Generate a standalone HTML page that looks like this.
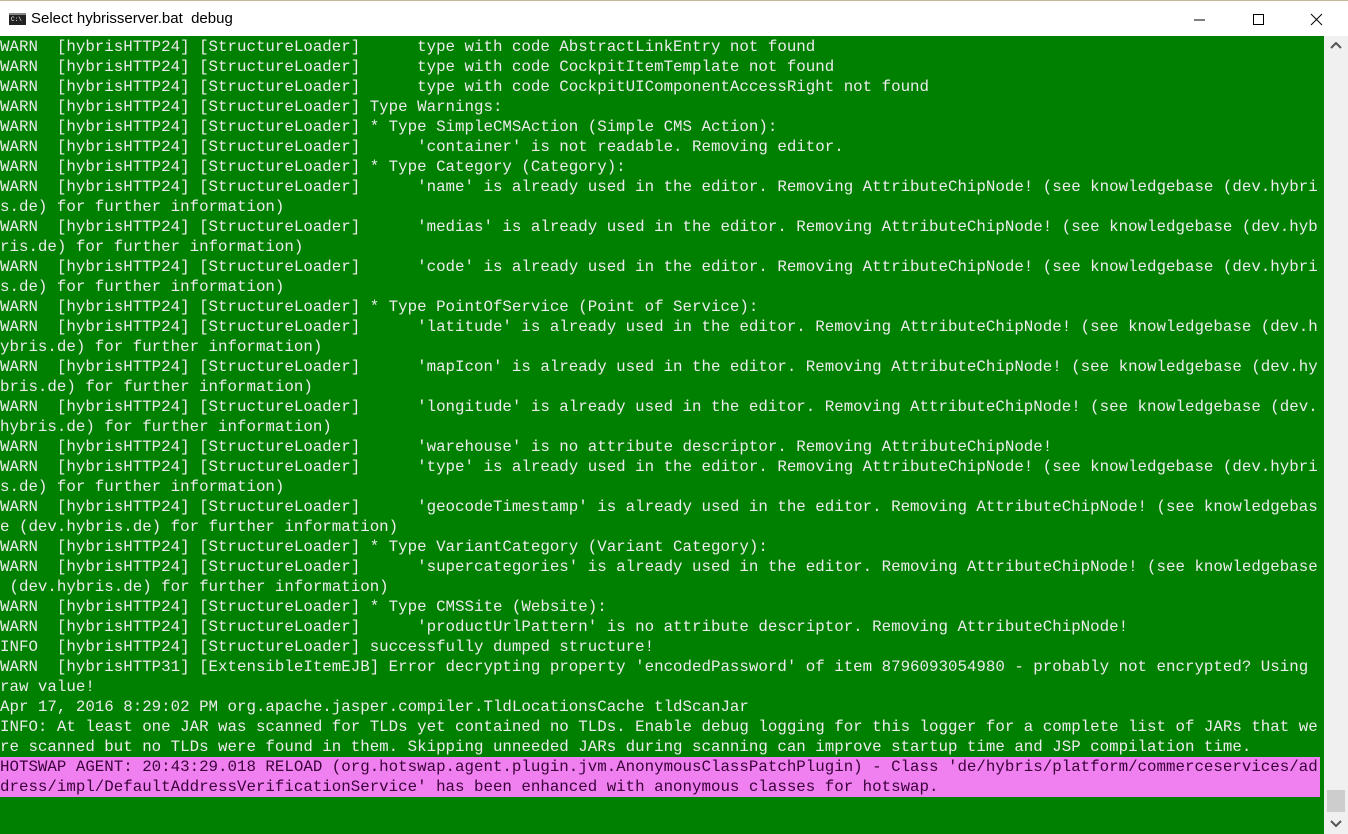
<!DOCTYPE html>
<html><head><meta charset="utf-8"><style>
html,body{margin:0;padding:0;width:1348px;height:834px;overflow:hidden;background:#fff;}
.title{position:absolute;left:0;top:0;width:1348px;height:36px;background:#fff;border-top:1px solid #c8b89a;box-sizing:border-box;font-family:"Liberation Sans",sans-serif;font-size:15px;color:#000;}
.title .t{position:absolute;left:31px;top:9px;white-space:pre;}
.icon{position:absolute;left:9px;top:12px;width:17px;height:12px;background:#222;border-top:2px solid #888;box-sizing:border-box;overflow:hidden;}
.icon span{position:absolute;left:2px;top:1px;font-size:6px;color:#fff;font-family:"Liberation Mono",monospace;}
.con{position:absolute;left:0;top:36px;width:1324px;height:798px;background:#008000;overflow:hidden;}
.lines{font-family:"Liberation Mono",monospace;font-size:15.8px;line-height:20px;color:#ececec;padding-top:1px;}
.lines div{height:20px;white-space:pre;overflow:hidden;}
.lines div.pink{background:#f080f0;color:#3a003a;width:1320px;}
.sb{position:absolute;left:1324px;top:36px;width:24px;height:798px;background:#f0f0f0;}
.thumb{position:absolute;left:3px;top:754px;width:18px;height:22px;background:#cdcdcd;}
</style></head><body>
<div class="title"><div class="icon"><span>C:\</span></div><div class="t">Select hybrisserver.bat  debug</div>
<svg style="position:absolute;left:1190px;top:10px" width="140" height="18">
<line x1="4" y1="9" x2="15" y2="9" stroke="#000" stroke-width="1"/>
<rect x="63.5" y="3.5" width="10" height="10" fill="none" stroke="#000"/>
<line x1="121" y1="3" x2="132" y2="14" stroke="#000"/><line x1="132" y1="3" x2="121" y2="14" stroke="#000"/>
</svg></div>
<div class="con"><div class="lines"><div>WARN  [hybrisHTTP24] [StructureLoader]      type with code AbstractLinkEntry not found</div><div>WARN  [hybrisHTTP24] [StructureLoader]      type with code CockpitItemTemplate not found</div><div>WARN  [hybrisHTTP24] [StructureLoader]      type with code CockpitUIComponentAccessRight not found</div><div>WARN  [hybrisHTTP24] [StructureLoader] Type Warnings:</div><div>WARN  [hybrisHTTP24] [StructureLoader] * Type SimpleCMSAction (Simple CMS Action):</div><div>WARN  [hybrisHTTP24] [StructureLoader]      'container' is not readable. Removing editor.</div><div>WARN  [hybrisHTTP24] [StructureLoader] * Type Category (Category):</div><div>WARN  [hybrisHTTP24] [StructureLoader]      'name' is already used in the editor. Removing AttributeChipNode! (see knowledgebase (dev.hybri</div><div>s.de) for further information)</div><div>WARN  [hybrisHTTP24] [StructureLoader]      'medias' is already used in the editor. Removing AttributeChipNode! (see knowledgebase (dev.hyb</div><div>ris.de) for further information)</div><div>WARN  [hybrisHTTP24] [StructureLoader]      'code' is already used in the editor. Removing AttributeChipNode! (see knowledgebase (dev.hybri</div><div>s.de) for further information)</div><div>WARN  [hybrisHTTP24] [StructureLoader] * Type PointOfService (Point of Service):</div><div>WARN  [hybrisHTTP24] [StructureLoader]      'latitude' is already used in the editor. Removing AttributeChipNode! (see knowledgebase (dev.h</div><div>ybris.de) for further information)</div><div>WARN  [hybrisHTTP24] [StructureLoader]      'mapIcon' is already used in the editor. Removing AttributeChipNode! (see knowledgebase (dev.hy</div><div>bris.de) for further information)</div><div>WARN  [hybrisHTTP24] [StructureLoader]      'longitude' is already used in the editor. Removing AttributeChipNode! (see knowledgebase (dev.</div><div>hybris.de) for further information)</div><div>WARN  [hybrisHTTP24] [StructureLoader]      'warehouse' is no attribute descriptor. Removing AttributeChipNode!</div><div>WARN  [hybrisHTTP24] [StructureLoader]      'type' is already used in the editor. Removing AttributeChipNode! (see knowledgebase (dev.hybri</div><div>s.de) for further information)</div><div>WARN  [hybrisHTTP24] [StructureLoader]      'geocodeTimestamp' is already used in the editor. Removing AttributeChipNode! (see knowledgebas</div><div>e (dev.hybris.de) for further information)</div><div>WARN  [hybrisHTTP24] [StructureLoader] * Type VariantCategory (Variant Category):</div><div>WARN  [hybrisHTTP24] [StructureLoader]      'supercategories' is already used in the editor. Removing AttributeChipNode! (see knowledgebase</div><div> (dev.hybris.de) for further information)</div><div>WARN  [hybrisHTTP24] [StructureLoader] * Type CMSSite (Website):</div><div>WARN  [hybrisHTTP24] [StructureLoader]      'productUrlPattern' is no attribute descriptor. Removing AttributeChipNode!</div><div>INFO  [hybrisHTTP24] [StructureLoader] successfully dumped structure!</div><div>WARN  [hybrisHTTP31] [ExtensibleItemEJB] Error decrypting property 'encodedPassword' of item 8796093054980 - probably not encrypted? Using</div><div>raw value!</div><div>Apr 17, 2016 8:29:02 PM org.apache.jasper.compiler.TldLocationsCache tldScanJar</div><div>INFO: At least one JAR was scanned for TLDs yet contained no TLDs. Enable debug logging for this logger for a complete list of JARs that we</div><div>re scanned but no TLDs were found in them. Skipping unneeded JARs during scanning can improve startup time and JSP compilation time.</div><div class="pink">HOTSWAP AGENT: 20:43:29.018 RELOAD (org.hotswap.agent.plugin.jvm.AnonymousClassPatchPlugin) - Class 'de/hybris/platform/commerceservices/ad</div><div class="pink">dress/impl/DefaultAddressVerificationService' has been enhanced with anonymous classes for hotswap.</div></div></div>
<div class="sb">
<svg style="position:absolute;left:6px;top:6px" width="12" height="8"><polyline points="1,6 6,1 11,6" fill="none" stroke="#555" stroke-width="2"/></svg>
<div class="thumb"></div>
<svg style="position:absolute;left:6px;top:784px" width="12" height="8"><polyline points="1,1 6,6 11,1" fill="none" stroke="#555" stroke-width="2"/></svg>
</div>
</body></html>
